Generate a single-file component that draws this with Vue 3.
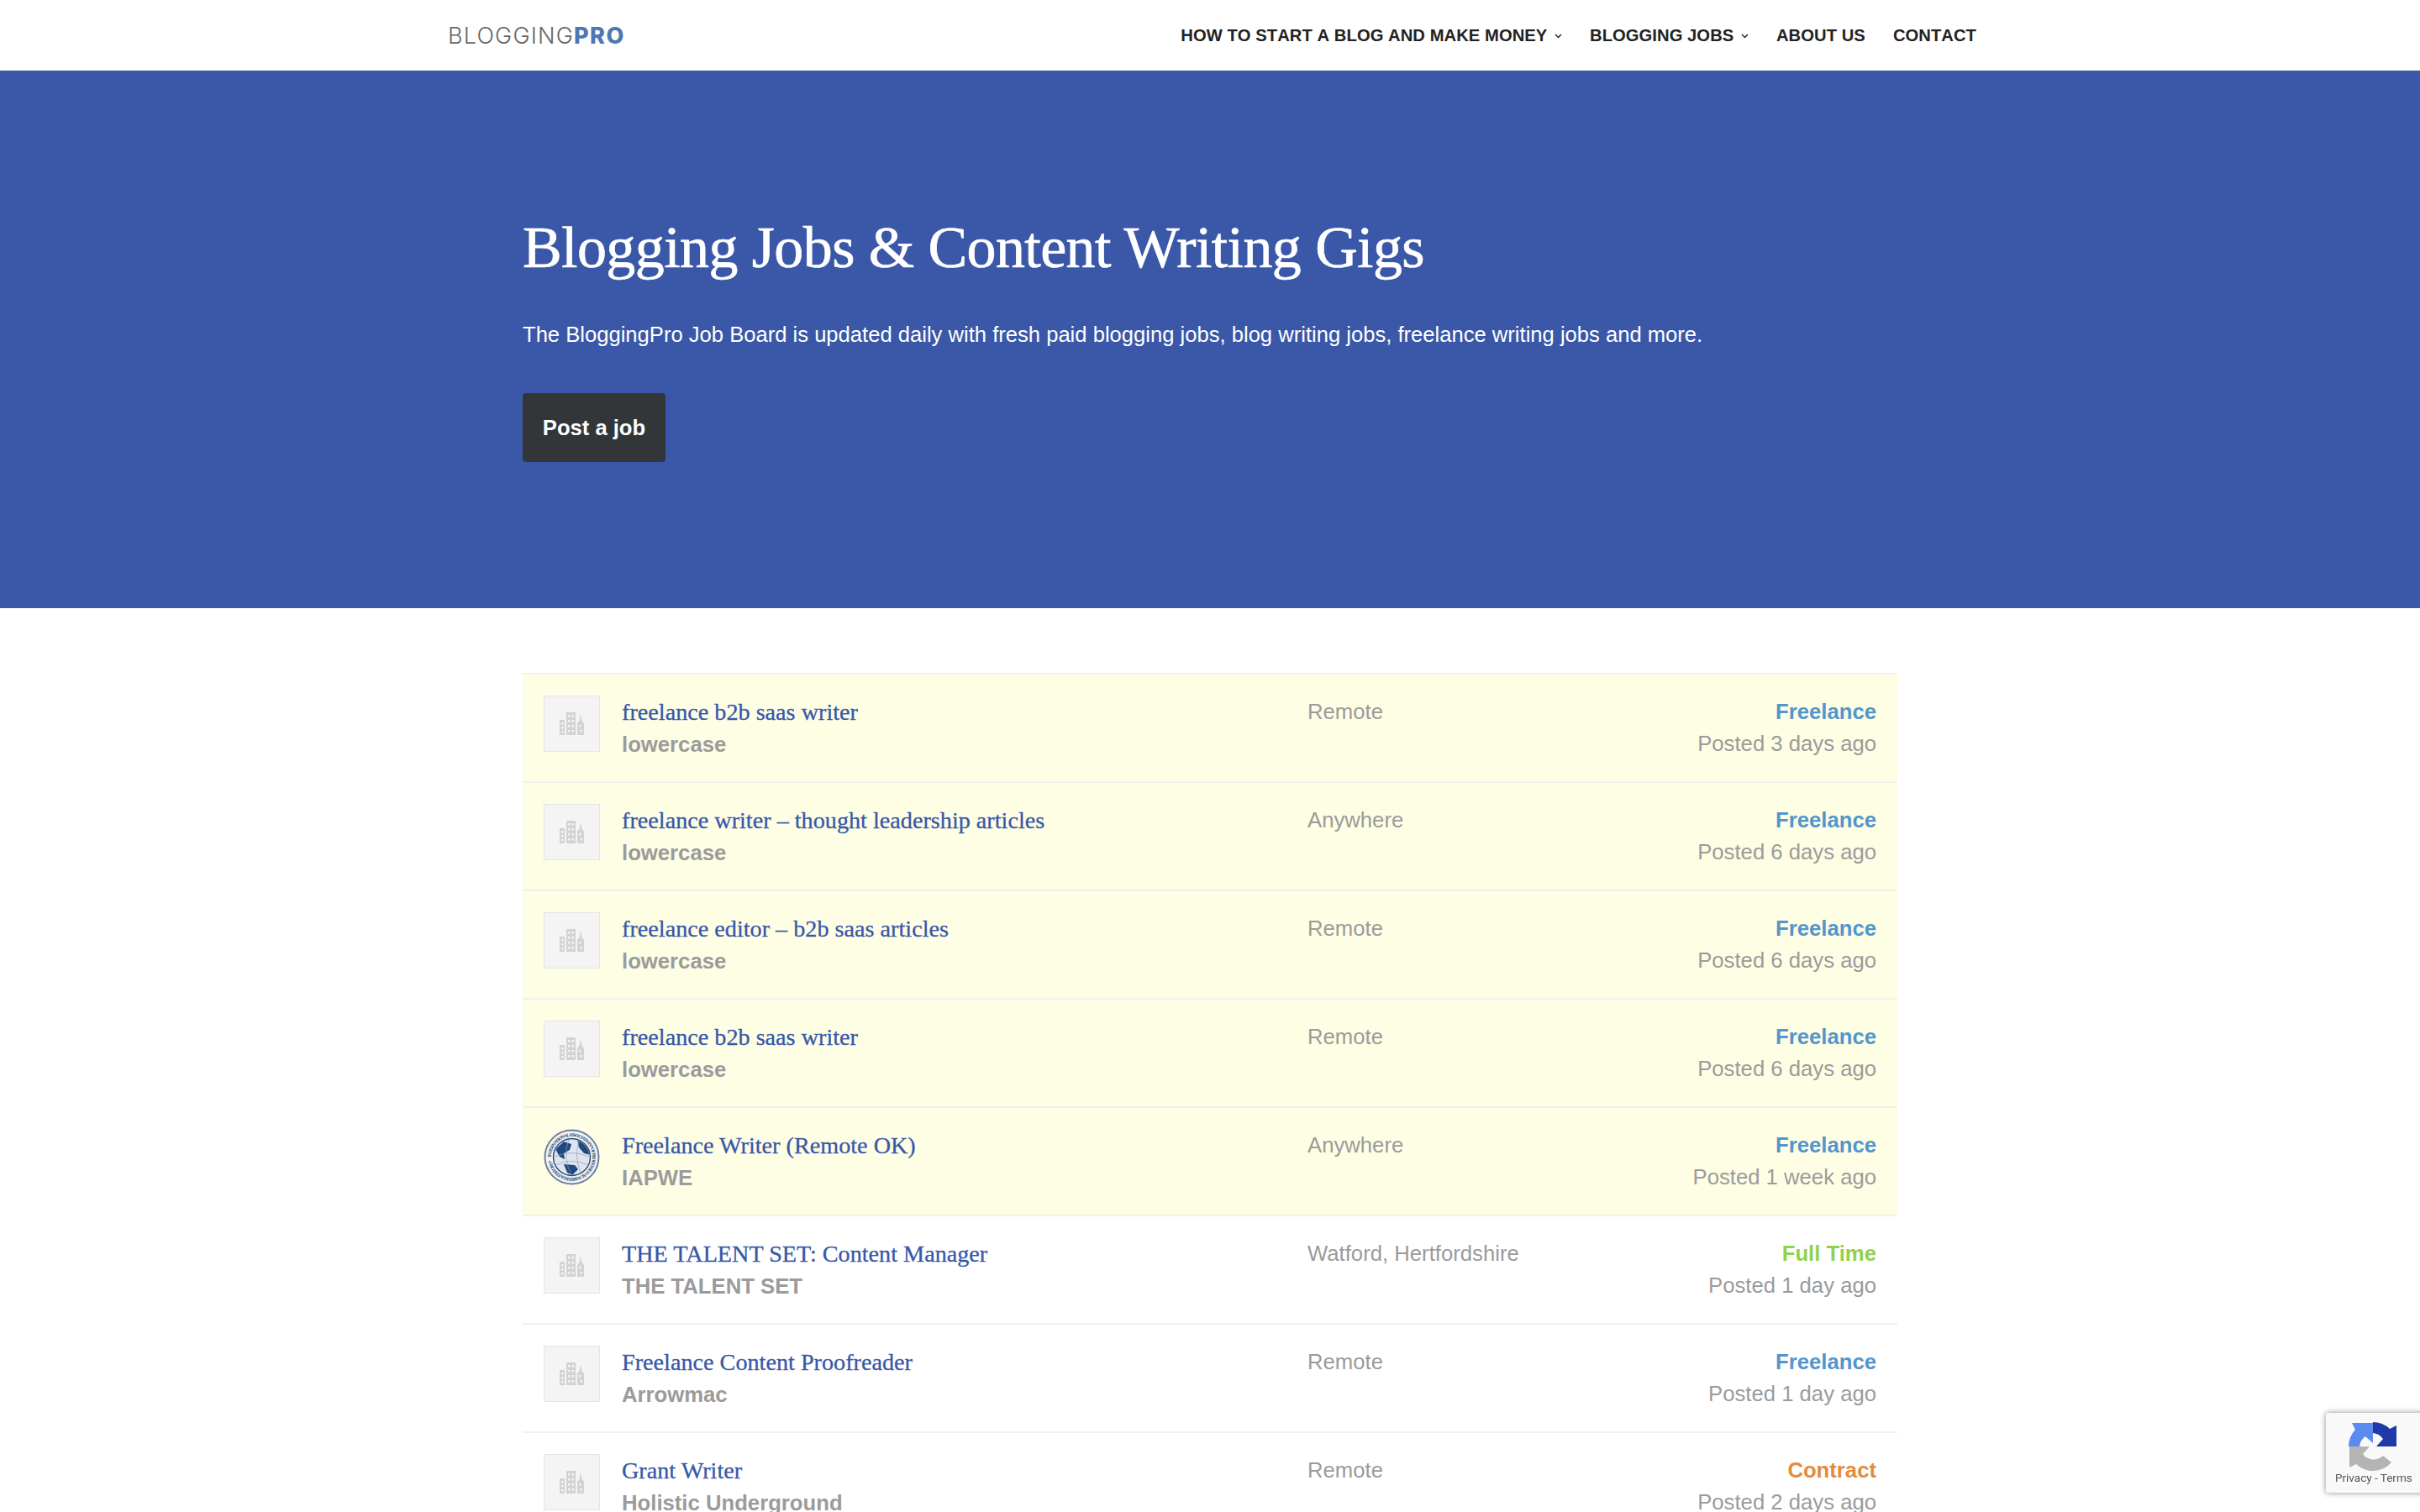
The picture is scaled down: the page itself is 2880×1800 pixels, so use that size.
<template>
  <div class="page">
    <header class="site-header">
      <a class="logo" href="#">BLOGGING<b>PRO</b></a>
      <nav class="menu">
        <a v-for="item in menu" :key="item.label" href="#">
          {{ item.label }}
          <svg v-if="item.caret" class="caret" viewBox="0 0 9 6" width="9" height="6">
            <path d="M1 1 L4.5 4.6 L8 1" fill="none" stroke="#222" stroke-width="1.4" />
          </svg>
        </a>
      </nav>
    </header>

    <section class="hero">
      <div class="hero-inner">
        <h1>Blogging Jobs &amp; Content Writing Gigs</h1>
        <p>The BloggingPro Job Board is updated daily with fresh paid blogging jobs, blog writing jobs, freelance writing jobs and more.</p>
        <a class="post-btn" href="#">Post a job</a>
      </div>
    </section>

    <ul class="jobs">
      <li v-for="(job, i) in jobs" :key="i" class="job" :class="{ featured: job.featured }">
        <div v-if="job.seal" class="seal">
          <svg viewBox="0 0 67 67" width="67" height="67">
            <defs>
              <path id="seal-ring" d="M33.5 33.5 m-24.6 0 a24.6 24.6 0 1 1 49.2 0 a24.6 24.6 0 1 1 -49.2 0" />
              <clipPath id="globe-clip"><circle cx="33.5" cy="33.5" r="21" /></clipPath>
            </defs>
            <circle cx="33.5" cy="33.5" r="32" fill="#f3f4ee" stroke="#6d7fa3" stroke-width="2" />
            <text class="seal-text" textLength="150"><textPath href="#seal-ring" textLength="150">INTERNATIONAL ASSOCIATION * OF PROFESSIONAL WRITERS &amp; EDITORS *</textPath></text>
            <circle cx="33.5" cy="33.5" r="22" fill="#dfe4ef" stroke="#24487f" stroke-width="1.4" />
            <g clip-path="url(#globe-clip)">
              <path d="M14 24 L24 15 L33 18 L31 25 L24 29 L25 36 L19 33 Z" fill="#1f4a80" />
              <path d="M40 13 L52 20 L56 31 L48 29 L42 22 Z" fill="#1f4a80" />
              <path d="M24 42 L37 43 L41 48 L34 55 L28 52 Z" fill="#1f4a80" />
              <path d="M13 33 Q33 24 54 33 M14 43 Q33 34 54 43 M30 12 Q22 33 33 55 M42 14 Q36 33 44 52" fill="none" stroke="#8ea2c2" stroke-width="0.7" />
            </g>
          </svg>
        </div>
        <div v-else class="company-logo">
          <svg viewBox="0 0 29 27" width="29" height="27">
            <path d="M0 9 H6 V27 H0 Z M8 0 H19 V27 H8 Z M21 27 V13 L23.5 10 L25 2 L26.5 10 L29 13 V27 Z" fill="#d3d3d3" />
            <path d="M2 12 h2.5 v2.5 h-2.5 Z M2 17 h2.5 v2.5 h-2.5 Z M2 22 h2.5 v2.5 h-2.5 Z M10 3 h2.5 v2.5 h-2.5 Z M14.5 3 h2.5 v2.5 h-2.5 Z M10 9 h2.5 v2.5 h-2.5 Z M14.5 9 h2.5 v2.5 h-2.5 Z M10 15 h2.5 v2.5 h-2.5 Z M14.5 15 h2.5 v2.5 h-2.5 Z M10 21 h2.5 v2.5 h-2.5 Z M14.5 21 h2.5 v2.5 h-2.5 Z M23 15 h2.5 v2.5 h-2.5 Z M24.5 21 h2.5 v2.5 h-2.5 Z" fill="#f4f4f4" />
          </svg>
        </div>
        <div class="job-main">
          <h3>{{ job.title }}</h3>
          <strong>{{ job.company }}</strong>
        </div>
        <div class="job-location">{{ job.location }}</div>
        <div class="job-meta">
          <div class="job-type" :class="job.type.toLowerCase().replace(' ', '-')">{{ job.type }}</div>
          <div class="job-date">Posted {{ job.posted }}</div>
        </div>
      </li>
    </ul>

    <div class="recaptcha">
      <svg viewBox="0 0 60 60" width="60" height="60">
        <path d="M52 49 A29 29 0 0 1 10 51 L2 55 V30 H26 L18 39 A16 16 0 0 0 42 41 Z" fill="#b4b4b4" />
        <path d="M1 30 A29 29 0 0 1 9 10 L5 2 H30 V26 L21 18 A16 16 0 0 0 14 30 Z" fill="#5a8bee" />
        <path d="M30 1 A29 29 0 0 1 50 9 L58 5 V30 H34 L42 21 A16 16 0 0 0 30 14 Z" fill="#1f3aa6" />
      </svg>
      <span>Privacy - Terms</span>
    </div>
  </div>
</template>

<script setup>
const menu = [
  { label: "HOW TO START A BLOG AND MAKE MONEY", caret: true },
  { label: "BLOGGING JOBS", caret: true },
  { label: "ABOUT US" },
  { label: "CONTACT" },
];

const jobs = [
  { title: "freelance b2b saas writer", company: "lowercase", location: "Remote", type: "Freelance", posted: "3 days ago", featured: true },
  { title: "freelance writer – thought leadership articles", company: "lowercase", location: "Anywhere", type: "Freelance", posted: "6 days ago", featured: true },
  { title: "freelance editor – b2b saas articles", company: "lowercase", location: "Remote", type: "Freelance", posted: "6 days ago", featured: true },
  { title: "freelance b2b saas writer", company: "lowercase", location: "Remote", type: "Freelance", posted: "6 days ago", featured: true },
  { title: "Freelance Writer (Remote OK)", company: "IAPWE", location: "Anywhere", type: "Freelance", posted: "1 week ago", featured: true, seal: true },
  { title: "THE TALENT SET: Content Manager", company: "THE TALENT SET", location: "Watford, Hertfordshire", type: "Full Time", posted: "1 day ago" },
  { title: "Freelance Content Proofreader", company: "Arrowmac", location: "Remote", type: "Freelance", posted: "1 day ago" },
  { title: "Grant Writer", company: "Holistic Underground", location: "Remote", type: "Contract", posted: "2 days ago" },
];
</script>

<style scoped>
.page {
  height: 100vh;
  overflow: hidden;
  font-family: "Liberation Sans", Arial, sans-serif;
  background: #fff;
}

a {
  text-decoration: none;
}

/* Header */
.site-header {
  height: 84px;
  padding: 0 528px 0 533px;
  display: flex;
  align-items: center;
  justify-content: space-between;
}

.logo {
  font-family: Inter, sans-serif;
  font-size: 27px;
  font-weight: 300;
  color: #666;
  letter-spacing: 1.2px;
}

.logo b {
  font-weight: 800;
  color: #4c78b5;
  letter-spacing: 1.6px;
}

.menu {
  display: flex;
  gap: 33px;
}

.menu a {
  font-size: 20.2px;
  font-weight: 700;
  color: #222;
  font-kerning: none;
  letter-spacing: 0.06px;
}

.caret {
  margin-left: 3px;
  vertical-align: 3px;
}

/* Hero */
.hero {
  height: 640px;
  background: #3a58a7;
  color: #fff;
  padding: 0 622px;
}

.hero-inner {
  padding-top: 170px;
}

.hero h1 {
  margin: 0;
  font-family: "Liberation Serif", serif;
  font-size: 70px;
  line-height: 82px;
  font-weight: 400;
  letter-spacing: -0.6px;
  -webkit-text-stroke: 0.7px #fff;
}

.hero p {
  margin: 44px 0 0;
  font-size: 25.6px;
  line-height: 36px;
  white-space: nowrap;
}

.post-btn {
  display: inline-block;
  margin-top: 52px;
  width: 170px;
  height: 82px;
  line-height: 82px;
  text-align: center;
  background: #333639;
  color: #fff;
  border-radius: 4px;
  font-size: 25.6px;
  font-weight: 700;
}

/* Job list */
.jobs {
  list-style: none;
  margin: 77px 622px 0;
  padding: 0;
}

.job {
  height: 129px;
  box-sizing: border-box;
  padding: 25px 25px 0 25px;
  border-top: 2px solid #f0f0ee;
  display: flex;
  align-items: flex-start;
}

.job.featured {
  background: #fefee5;
}

.company-logo,
.seal {
  width: 67px;
  height: 67px;
  box-sizing: border-box;
  flex: none;
  display: flex;
  align-items: center;
  justify-content: center;
}

.company-logo {
  background: #f4f4f4;
  border: 1px solid #e4e4e4;
}

.seal-text {
  font-family: "Liberation Serif", serif;
  font-size: 5.6px;
  font-weight: 700;
  fill: #274a7e;
}

.job-main {
  width: 816px;
  flex: none;
  padding-left: 26px;
  padding-top: 1px;
}

.job-main h3 {
  margin: 0;
  font-family: "Liberation Serif", serif;
  font-size: 28.2px;
  line-height: 38px;
  font-weight: 400;
  color: #3757a8;
  -webkit-text-stroke: 0.3px #3757a8;
}

.job-main strong {
  display: block;
  font-size: 25.7px;
  line-height: 38px;
  color: #9b9b9b;
}

.job-location {
  flex: 1;
  font-size: 25.7px;
  line-height: 38px;
  color: #9b9b9b;
}

.job-meta {
  text-align: right;
  font-size: 25.7px;
  line-height: 38px;
  color: #9b9b9b;
}

.job-type {
  font-weight: 700;
}

.job-type.freelance {
  color: #5296cc;
}

.job-type.full-time {
  color: #90d24b;
}

.job-type.contract {
  color: #e58b3e;
}

/* reCAPTCHA badge */
.recaptcha {
  position: fixed;
  left: 2768px;
  top: 1682px;
  width: 180px;
  height: 95px;
  box-sizing: border-box;
  padding: 10px 0 0 26px;
  background: #f9f9f9;
  border-radius: 3px;
  box-shadow: 0 0 7px rgba(0, 0, 0, 0.45);
  font-family: Roboto, sans-serif;
  color: #555;
}

.recaptcha svg {
  display: block;
}

.recaptcha span {
  position: absolute;
  left: 11px;
  top: 69px;
  font-size: 13.5px;
  white-space: nowrap;
}
</style>
